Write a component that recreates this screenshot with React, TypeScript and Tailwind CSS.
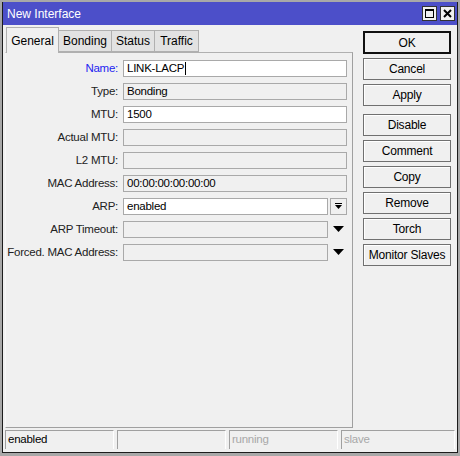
const font = { fontFamily: '"Liberation Sans", Arial, sans-serif' }

type Row = { label: string; value?: string; editable?: boolean; kind?: 'plain' | 'button' | 'arrow'; blue?: boolean }

const rows: Row[] = [
  { label: 'Name:', value: 'LINK-LACP', editable: true, blue: true },
  { label: 'Type:', value: 'Bonding' },
  { label: 'MTU:', value: '1500', editable: true },
  { label: 'Actual MTU:' },
  { label: 'L2 MTU:' },
  { label: 'MAC Address:', value: '00:00:00:00:00:00' },
  { label: 'ARP:', value: 'enabled', editable: true, kind: 'button' },
  { label: 'ARP Timeout:', kind: 'arrow' },
  { label: 'Forced. MAC Address:', kind: 'arrow' },
]

const buttons = ['OK', 'Cancel', 'Apply', 'Disable', 'Comment', 'Copy', 'Remove', 'Torch', 'Monitor Slaves']

function DownArrow() {
  return (
    <svg width="11" height="7" viewBox="0 0 11 7">
      <polygon points="0,0 11,0 5.5,6" fill="#000" />
    </svg>
  )
}

function FormRow({ row }: { row: Row }) {
  const kind = row.kind ?? 'plain'
  return (
    <div className="flex items-center h-[17px]">
      <span className={`w-[113px] text-right pr-px whitespace-nowrap ${row.blue ? 'text-[#2424f0]' : 'text-[#222]'}`}>{row.label}</span>
      <div
        className={`ml-[4px] h-[17px] border border-[#a9a9a9] flex items-center pl-[3px] leading-none ${
          kind === 'plain' ? 'w-[224px]' : 'w-[205px]'
        } ${row.editable ? 'bg-white' : 'bg-[#f0f0f0]'}`}
      >
        {row.value}
        {row.label === 'Name:' && <span className="w-px h-[13px] bg-black ml-px" />}
      </div>
      {kind === 'button' && (
        <div className="ml-[2px] w-[17px] h-[17px] border border-[#a9a9a9] bg-[#f0f0f0] flex flex-col items-center justify-center gap-px">
          <span className="w-[7px] h-px bg-black" />
          <svg width="7" height="5" viewBox="0 0 7 5">
            <polygon points="0,0 7,0 3.5,4" fill="#000" />
          </svg>
        </div>
      )}
      {kind === 'arrow' && (
        <div className="ml-[2px] w-[17px] h-[17px] flex items-center justify-center">
          <DownArrow />
        </div>
      )}
    </div>
  )
}

export default function App() {
  return (
    <div className="w-[460px] h-[456px] bg-[#a8a8a8] pt-[2px] pl-[2px] text-[11.5px] tracking-[-0.25px] text-black" style={font}>
      <div className="w-[456px] h-[451px] bg-[#f0f0f0] border-x border-b border-[#1c1c1c] flex flex-col">
        {/* title bar */}
        <div className="h-[23px] bg-[#4c4fc9] flex items-center pl-[4px] pr-[2px] shrink-0">
          <span className="text-white text-[12px] tracking-normal flex-1">New Interface</span>
          <div className="flex gap-[3px]">
            <div className="w-[15px] h-[15px] bg-[#f0f0f0] border border-[#333] flex items-center justify-center">
              <span className="w-[9px] h-[9px] border border-black border-t-2" />
            </div>
            <div className="w-[15px] h-[15px] bg-[#f0f0f0] border border-[#333] flex items-center justify-center">
              <svg width="9" height="9" viewBox="0 0 9 9">
                <path d="M1 1 L8 8 M8 1 L1 8" stroke="#000" strokeWidth="2" />
              </svg>
            </div>
          </div>
        </div>

        <div className="flex flex-1 pt-[2px]">
          {/* tabs and panel */}
          <div className="ml-[2px] w-[348px] flex flex-col">
            <div className="flex items-end h-[25px] pl-px text-[12px] tracking-normal">
              <div className="h-[26px] w-[53px] -mb-px bg-[#f0f0f0] border border-b-0 border-[#b0b0b0] flex items-center justify-center relative z-10">
                General
              </div>
              <div className="h-[22px] w-[53px] bg-[#e2e2e2] border border-l-0 border-[#b0b0b0] flex items-center justify-center">
                Bonding
              </div>
              <div className="h-[22px] w-[43px] bg-[#e2e2e2] border border-l-0 border-[#b0b0b0] flex items-center justify-center">
                Status
              </div>
              <div className="h-[22px] w-[44px] bg-[#e2e2e2] border border-l-0 border-[#b0b0b0] flex items-center justify-center">
                Traffic
              </div>
            </div>
            <div className="flex-1 border border-t border-[#b0b0b0] border-l-[#f8f8f8] border-b-[#a0a0a0] border-r-[#a0a0a0] pt-[7px] flex flex-col gap-[6px]">
              {rows.map((r) => (
                <FormRow key={r.label} row={r} />
              ))}
            </div>
          </div>

          {/* buttons */}
          <div className="ml-[10px] pt-[4px] flex flex-col text-[12px] tracking-[-0.2px]">
            {buttons.map((b, i) => (
              <div
                key={b}
                className={`w-[88px] flex items-center justify-center bg-[#f0f0f0] ${
                  i === 0 ? 'h-[23px] border-2 border-[#111]' : 'h-[22px] border border-[#707070] shadow-[inset_1px_1px_0_#fff]'
                } ${i === 0 ? '' : i === 3 ? 'mt-[8px]' : 'mt-[4px]'}`}
              >
                {b}
              </div>
            ))}
          </div>
        </div>

        {/* status bar */}
        <div className="h-[24px] flex gap-[3px] pl-[2px] pr-[2px] pt-[2px] pb-[3px] shrink-0">
          <div className="w-[109px] border-t border-l border-[#a0a0a0] border-r border-r-[#fff] flex items-center pl-[2px]">enabled</div>
          <div className="w-[109px] border-t border-l border-[#a0a0a0] border-r border-r-[#fff]" />
          <div className="w-[109px] border-t border-l border-[#a0a0a0] border-r border-r-[#fff] flex items-center pl-[2px] text-[#a8a8a8]">running</div>
          <div className="flex-1 border-t border-l border-[#a0a0a0] border-r border-r-[#fff] flex items-center pl-[2px] text-[#a8a8a8]">slave</div>
        </div>
      </div>
    </div>
  )
}
